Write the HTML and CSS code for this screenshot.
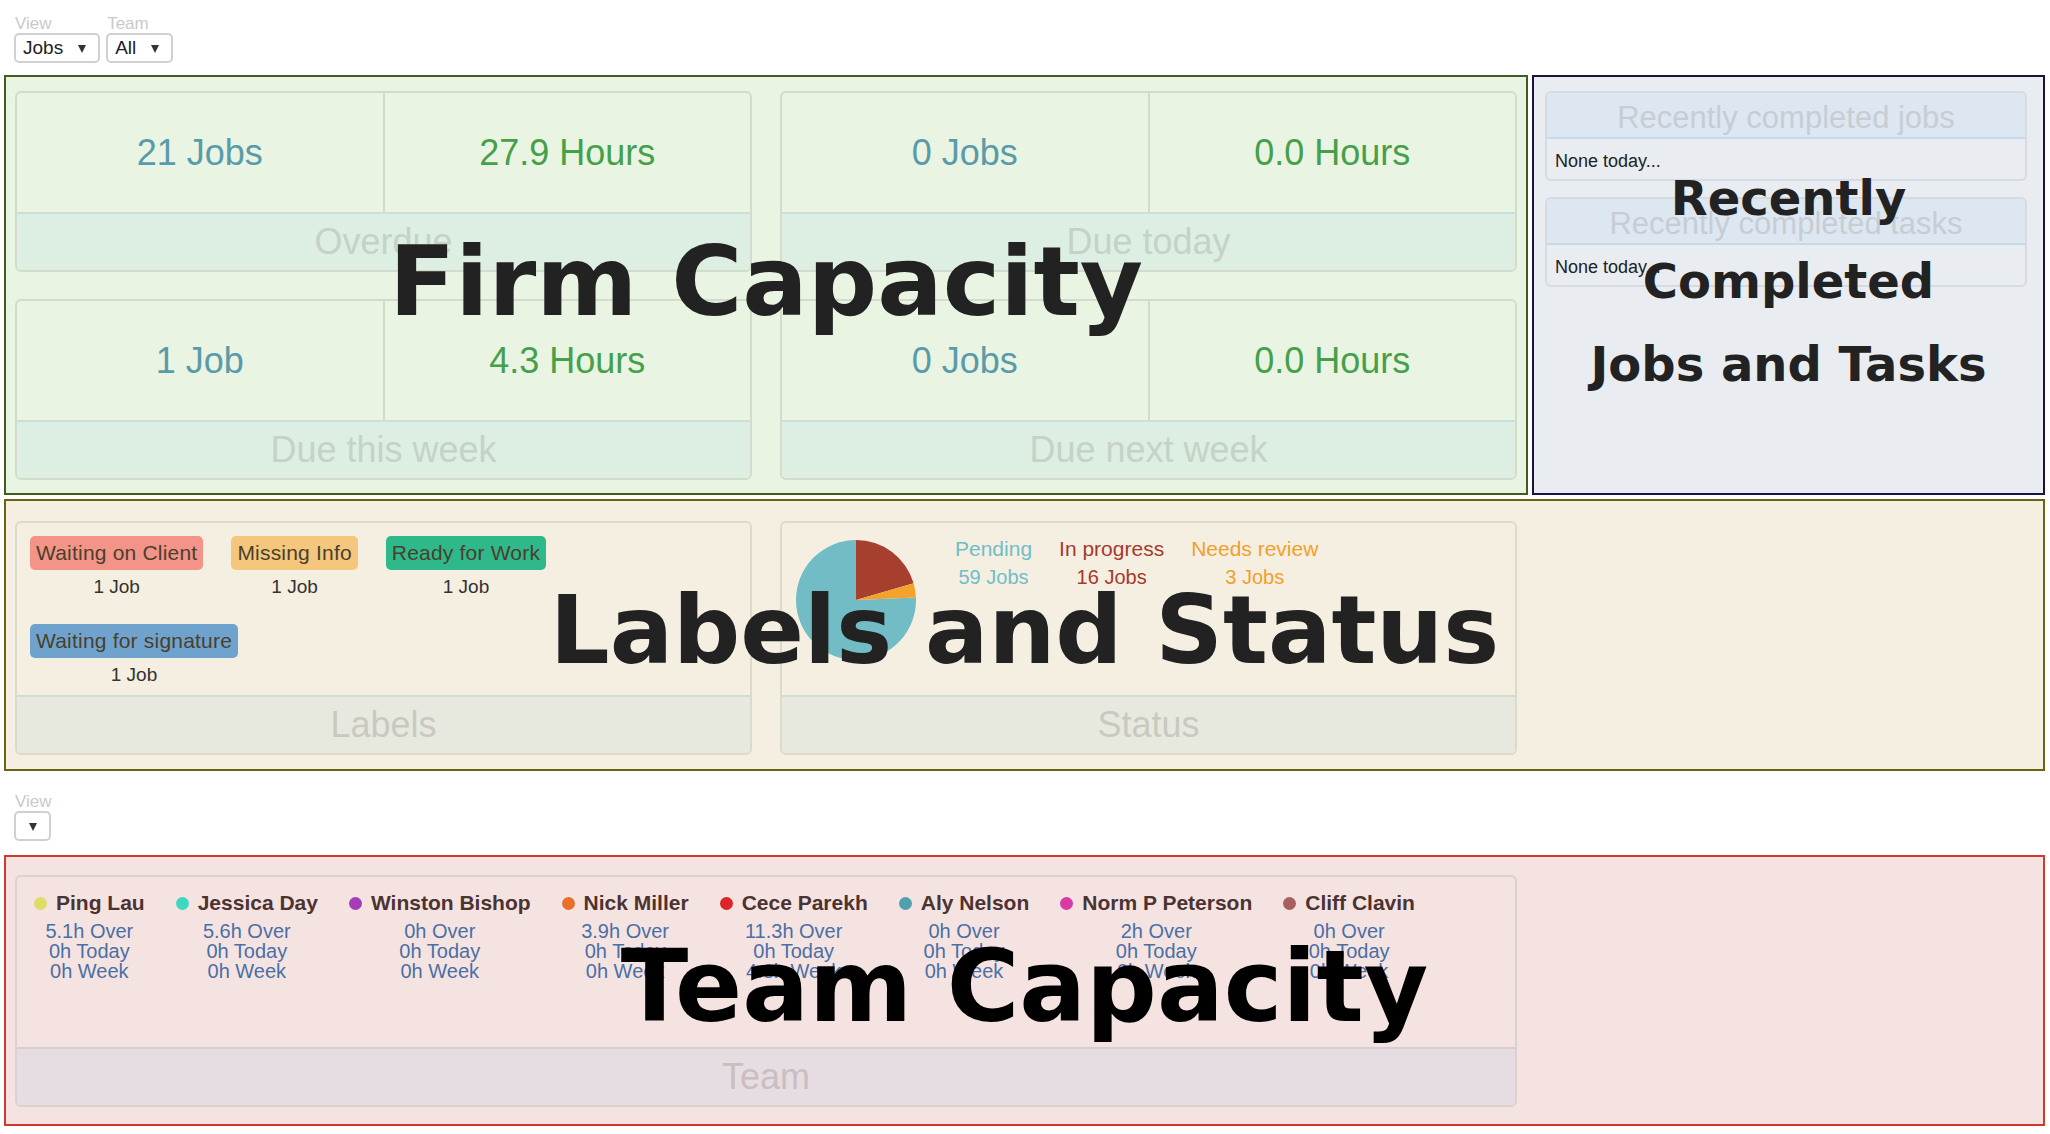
FILE: index.html
```html
<!DOCTYPE html>
<html lang="en">
<head>
<meta charset="utf-8">
<title>Dashboard</title>
<link rel="stylesheet" href="styles.css">
</head>
<body>
<div class="page">
  <div class="controls top-controls">
    <div class="ctl">
      <div class="ctl-label">View</div>
      <div class="select"><span>Jobs</span><i class="caret"></i></div>
    </div>
    <div class="ctl">
      <div class="ctl-label">Team</div>
      <div class="select"><span>All</span><i class="caret"></i></div>
    </div>
  </div>

  <div class="row1">
    <section class="firm">
      <div class="stat-grid">
        <div class="card g-card">
          <div class="stats"><div class="stat jobs">21 Jobs</div><div class="stat hours">27.9 Hours</div></div>
          <div class="card-foot g-foot">Overdue</div>
        </div>
        <div class="card g-card">
          <div class="stats"><div class="stat jobs">0 Jobs</div><div class="stat hours">0.0 Hours</div></div>
          <div class="card-foot g-foot">Due today</div>
        </div>
        <div class="card g-card">
          <div class="stats"><div class="stat jobs">1 Job</div><div class="stat hours">4.3 Hours</div></div>
          <div class="card-foot g-foot">Due this week</div>
        </div>
        <div class="card g-card">
          <div class="stats"><div class="stat jobs">0 Jobs</div><div class="stat hours">0.0 Hours</div></div>
          <div class="card-foot g-foot">Due next week</div>
        </div>
      </div>
      <div class="overlay ov-firm">Firm Capacity</div>
    </section>

    <section class="recent">
      <div class="rc-card">
        <div class="rc-head">Recently completed jobs</div>
        <div class="rc-body">None today...</div>
      </div>
      <div class="rc-card">
        <div class="rc-head">Recently completed tasks</div>
        <div class="rc-body">None today...</div>
      </div>
      <div class="overlay ov-recent">Recently<br>Completed<br>Jobs and Tasks</div>
    </section>
  </div>

  <section class="labstat">
    <div class="ls-grid">
      <div class="card t-card">
        <div class="ls-body labels">
          <div class="lab-item"><span class="badge b-red">Waiting on Client</span><span class="lab-count">1 Job</span></div>
          <div class="lab-item"><span class="badge b-yellow">Missing Info</span><span class="lab-count">1 Job</span></div>
          <div class="lab-item"><span class="badge b-green">Ready for Work</span><span class="lab-count">1 Job</span></div>
          <div class="lab-item"><span class="badge b-blue">Waiting for signature</span><span class="lab-count">1 Job</span></div>
        </div>
        <div class="card-foot t-foot">Labels</div>
      </div>
      <div class="card t-card">
        <div class="ls-body status">
          <svg class="pie" width="120" height="120" viewBox="0 0 120 120">
            <path d="M60,60 L119.95,57.58 A60,60 0 1 1 60,0 Z" fill="#72bcc5"/>
            <path d="M60,60 L60,0 A60,60 0 0 1 117.63,43.31 Z" fill="#a63f2e"/>
            <path d="M60,60 L117.63,43.31 A60,60 0 0 1 119.95,57.58 Z" fill="#f3a32b"/>
          </svg>
          <div class="legend">
            <div class="lg-item lg-pending"><div class="lg-name">Pending</div><div class="lg-count">59 Jobs</div></div>
            <div class="lg-item lg-progress"><div class="lg-name">In progress</div><div class="lg-count">16 Jobs</div></div>
            <div class="lg-item lg-review"><div class="lg-name">Needs review</div><div class="lg-count">3 Jobs</div></div>
          </div>
        </div>
        <div class="card-foot t-foot">Status</div>
      </div>
    </div>
    <div class="overlay ov-ls">Labels and Status</div>
  </section>

  <div class="controls mid-controls">
    <div class="ctl">
      <div class="ctl-label">View</div>
      <div class="select select-empty"><i class="caret"></i></div>
    </div>
  </div>

  <section class="team">
    <div class="card p-card">
      <div class="team-body">
        <div class="mem"><div class="mem-name"><i class="dot" style="background:#e0dc68"></i>Ping Lau</div><div class="mem-sub">5.1h Over<br>0h Today<br>0h Week</div></div>
        <div class="mem"><div class="mem-name"><i class="dot" style="background:#3dd8c1"></i>Jessica Day</div><div class="mem-sub">5.6h Over<br>0h Today<br>0h Week</div></div>
        <div class="mem"><div class="mem-name"><i class="dot" style="background:#a63db6"></i>Winston Bishop</div><div class="mem-sub">0h Over<br>0h Today<br>0h Week</div></div>
        <div class="mem"><div class="mem-name"><i class="dot" style="background:#e8702b"></i>Nick Miller</div><div class="mem-sub">3.9h Over<br>0h Today<br>0h Week</div></div>
        <div class="mem"><div class="mem-name"><i class="dot" style="background:#db2528"></i>Cece Parekh</div><div class="mem-sub">11.3h Over<br>0h Today<br>4.3h Week</div></div>
        <div class="mem"><div class="mem-name"><i class="dot" style="background:#4fa2ad"></i>Aly Nelson</div><div class="mem-sub">0h Over<br>0h Today<br>0h Week</div></div>
        <div class="mem"><div class="mem-name"><i class="dot" style="background:#d83ba3"></i>Norm P Peterson</div><div class="mem-sub">2h Over<br>0h Today<br>0h Week</div></div>
        <div class="mem"><div class="mem-name"><i class="dot" style="background:#a8605f"></i>Cliff Clavin</div><div class="mem-sub">0h Over<br>0h Today<br>0h Week</div></div>
      </div>
      <div class="card-foot p-foot">Team</div>
    </div>
    <div class="overlay ov-team">Team Capacity</div>
  </section>
</div>
</body>
</html>
```

FILE: styles.css
```css
* { box-sizing: border-box; margin: 0; padding: 0; }

body {
  margin: 0;
  background: #ffffff;
  font-family: "Liberation Sans", Arial, sans-serif;
  color: #222;
}

.page {
  width: 2050px;
  padding: 0 5px 0 4px;
}

/* ---------- selects ---------- */
.controls {
  display: flex;
  gap: 6px;
  padding-left: 10px;
}
.top-controls { padding-top: 14px; margin-bottom: 12px; }
.mid-controls { margin-top: 21px; margin-bottom: 14px; }

.ctl { display: flex; flex-direction: column; align-items: flex-start; }
.ctl-label {
  font-size: 17px;
  line-height: 19px;
  color: #c9c9c9;
  padding-left: 1px;
}
.select {
  height: 30px;
  border: 2px solid #d0d0d0;
  border-radius: 5px;
  background: #fff;
  display: flex;
  align-items: center;
  gap: 15px;
  padding: 0 12px 0 7px;
  font-size: 19px;
  color: #222;
}
.select-empty { padding: 0 12px 0 13px; }
.caret {
  display: block;
  width: 0;
  height: 0;
  border-left: 4px solid transparent;
  border-right: 4px solid transparent;
  border-top: 8px solid #333;
  margin-top: 2px;
}

/* ---------- shared card ---------- */
.card {
  border: 2px solid;
  border-radius: 6px;
  overflow: hidden;
  display: flex;
  flex-direction: column;
}
.card-foot {
  height: 58px;
  border-top: 2px solid;
  display: flex;
  align-items: center;
  justify-content: center;
  font-size: 36px;
}

.overlay {
  position: absolute;
  inset: 0;
  display: flex;
  align-items: center;
  justify-content: center;
  text-align: center;
  font-family: "DejaVu Sans", sans-serif;
  font-weight: bold;
  color: #222;
  line-height: 1;
  white-space: nowrap;
  padding-bottom: 8px;
  pointer-events: none;
}

/* ---------- firm capacity ---------- */
.row1 { display: flex; gap: 4px; }

.firm {
  position: relative;
  width: 1524px;
  flex: none;
  border: 2px solid #3f5d1c;
  background: #e9f4e2;
  padding: 14px 9px 13px;
}
.stat-grid {
  display: grid;
  grid-template-columns: 1fr 1fr;
  column-gap: 28px;
  row-gap: 27px;
}
.g-card { border-color: #d3dccb; }
.stats { height: 119px; display: flex; }
.stat {
  flex: 1;
  display: flex;
  align-items: center;
  justify-content: center;
  font-size: 36px;
}
.stat + .stat { border-left: 2px solid #d3dccb; }
.jobs { color: #5a9bab; }
.hours { color: #45a04a; }
.g-foot {
  border-top-color: #c9dfdb;
  background: #dcefe2;
  color: #c6d2c7;
}
.ov-firm { font-size: 97px; }

/* ---------- recently completed ---------- */
.recent {
  position: relative;
  flex: 1;
  border: 2px solid #1b1240;
  background: #e9edf2;
  padding: 14px 16px 0 11px;
}
.rc-card {
  border: 2px solid #d6dbe1;
  border-radius: 6px;
  overflow: hidden;
  margin-bottom: 16px;
}
.rc-head {
  height: 46px;
  background: #dce7f2;
  border-bottom: 2px solid #c6d9e9;
  font-size: 31px;
  line-height: 37px;
  padding-top: 6px;
  text-align: center;
  color: #c7cdd3;
}
.rc-body {
  height: 40px;
  padding: 4px 8px 0;
  font-size: 18px;
  line-height: 36px;
  color: #222;
}
.ov-recent { font-size: 48px; line-height: 83px; }

/* ---------- labels and status ---------- */
.labstat {
  position: relative;
  margin-top: 4px;
  border: 2px solid #6b6412;
  background: #f5efe1;
  padding: 20px 9px 14px;
}
.ls-grid {
  display: grid;
  grid-template-columns: 737px 737px;
  column-gap: 28px;
}
.t-card { border-color: #dcdacb; }
.ls-body { height: 172px; }
.t-foot {
  border-top-color: #d2dcd7;
  background: #e7e9df;
  color: #cac9bf;
}

.labels {
  display: flex;
  flex-wrap: wrap;
  align-content: flex-start;
  column-gap: 28px;
  row-gap: 25px;
  padding: 13px 13px;
}
.lab-item {
  display: flex;
  flex-direction: column;
  align-items: center;
}
.badge {
  font-size: 21px;
  line-height: 26px;
  padding: 4px 6px;
  border-radius: 5px;
  color: #4a3f2e;
  letter-spacing: 0.2px;
}
.b-red { background: #f49388; }
.b-yellow { background: #f4c77d; }
.b-green { background: #2fb98a; }
.b-blue { background: #6fa3cd; }
.lab-count {
  margin-top: 5px;
  font-size: 19px;
  line-height: 24px;
  color: #333;
}

.status {
  display: flex;
  align-items: flex-start;
  padding: 17px 14px;
}
.pie { display: block; flex: none; }
.legend {
  display: flex;
  gap: 27px;
  margin-left: 39px;
  margin-top: -5px;
}
.lg-item { text-align: center; }
.lg-name { font-size: 21px; line-height: 28px; }
.lg-count { font-size: 20px; line-height: 28px; }
.lg-pending { color: #70bdc9; }
.lg-progress { color: #a53a2a; }
.lg-review { color: #f2a02b; }
.ov-ls { font-size: 94px; }

/* ---------- team capacity ---------- */
.team {
  position: relative;
  border: 2px solid #d3392a;
  background: #f5e3e1;
  padding: 18px 9px 17px;
}
.p-card { width: 1502px; border-color: #ddd0d1; }
.team-body {
  height: 170px;
  display: flex;
  align-items: flex-start;
  padding: 14px 17px;
}
.mem {
  display: flex;
  flex-direction: column;
  align-items: center;
  margin-right: 31px;
}
.mem-name {
  display: flex;
  align-items: center;
  gap: 9px;
  font-size: 21px;
  line-height: 24px;
  font-weight: bold;
  color: #4b3331;
  white-space: nowrap;
}
.dot {
  display: block;
  width: 13px;
  height: 13px;
  border-radius: 50%;
}
.mem-sub {
  margin-top: 6px;
  font-size: 20px;
  line-height: 20px;
  color: #4a6fa6;
  text-align: center;
}
.p-foot {
  border-top-color: #d6cdd7;
  background: #e6dde2;
  color: #cbbdc0;
}
.ov-team { font-size: 99px; color: #000; }
```
